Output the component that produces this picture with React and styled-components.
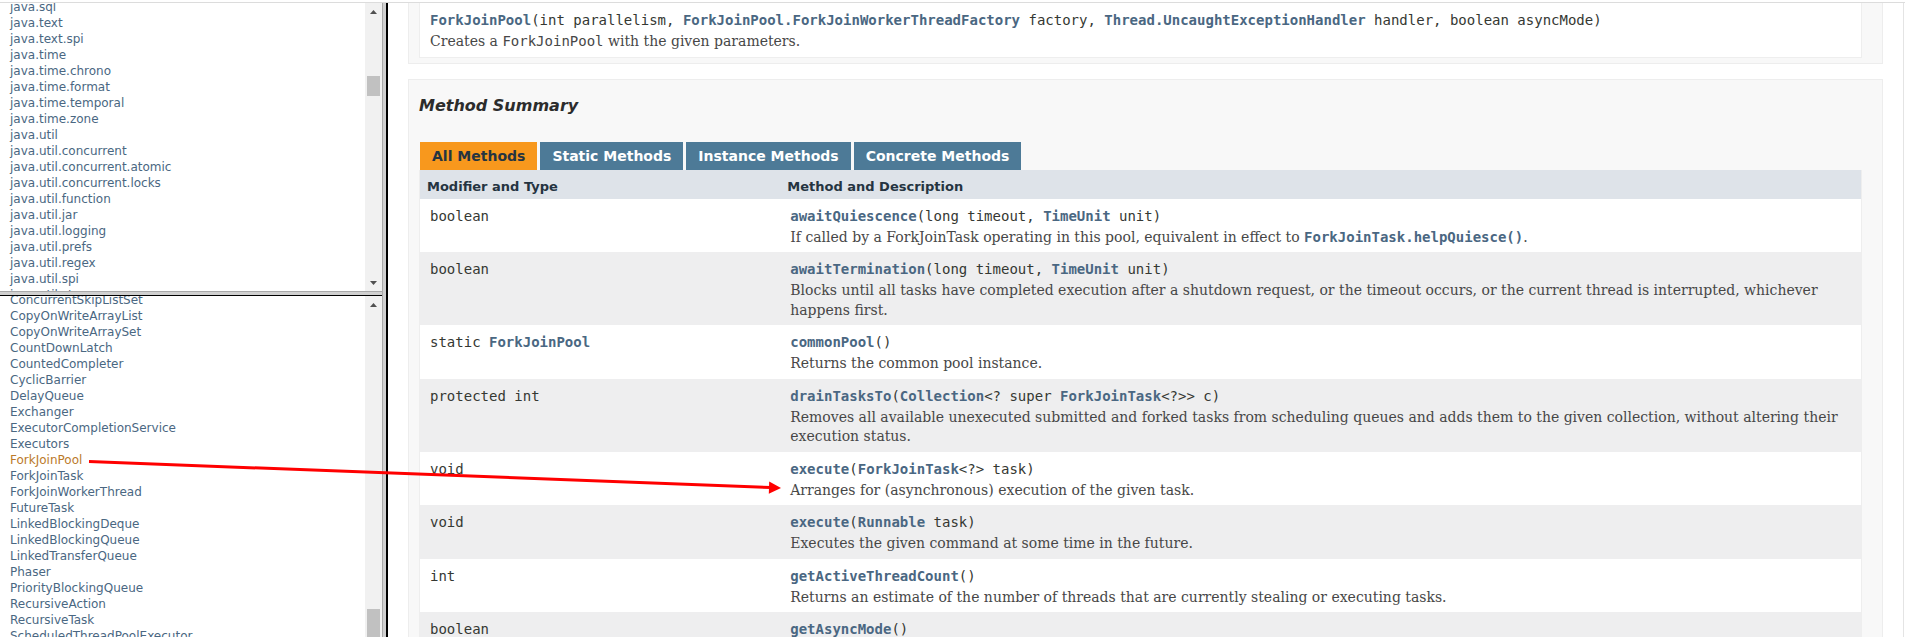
import React from 'react';
import styled, { createGlobalStyle } from 'styled-components';

const Global = createGlobalStyle`
  html, body { margin: 0; padding: 0; background: #fff; overflow: hidden; }
  #root { width: 1905px; height: 637px; }
`;

const Page = styled.div`
  position: relative;
  width: 1905px;
  height: 637px;
  display: flex;
  flex-direction: column;
  background: #fff;
  overflow: hidden;
`;

const TopEdge = styled.div`
  flex: none;
  height: 2px;
  border-bottom: 1px solid #dcdcdc;
`;

const Frames = styled.div`
  flex: 1;
  min-height: 0;
  display: flex;
`;

const LeftColumn = styled.div`
  flex: none;
  width: 382px;
  display: flex;
  flex-direction: column;
`;

const Frame = styled.div`
  display: flex;
  flex: ${p => (p.$h ? 'none' : '1')};
  height: ${p => (p.$h ? `${p.$h}px` : 'auto')};
  min-height: 0;
  overflow: hidden;
`;

const HDivider = styled.div`
  flex: none;
  height: 3px;
  background: #d0d0d0;
  border-top: 1px solid #a9a9a9;
  border-bottom: 1px solid #000;
`;

const VDivider = styled.div`
  flex: none;
  width: 3px;
  background: #d0d0d0;
  border-left: 1px solid #a9a9a9;
  border-right: 2px solid #000;
`;

const ListArea = styled.div`
  flex: 1;
  overflow: hidden;
  background: #fff;
`;

const IndexList = styled.ul`
  list-style: none;
  margin: -5px 10px 0 10px;
  padding: 0;
  font-family: "DejaVu Sans", "Liberation Sans", sans-serif;
  font-size: 12px;
`;

const IndexItem = styled.li`
  padding-top: 2px;
  line-height: 14px;
  white-space: nowrap;
  color: ${p => (p.$active ? '#bb7a2a' : '#4a6782')};
`;

const Scrollbar = styled.div`
  flex: none;
  width: 17px;
  background: #f1f1f1;
  display: flex;
  flex-direction: column;
`;

const ScrollButton = styled.div`
  flex: none;
  height: 17px;
  display: flex;
  align-items: center;
  justify-content: center;
`;

const Track = styled.div`
  flex: 1;
  min-height: 0;
  overflow: hidden;
`;

const Thumb = styled.div`
  margin: ${p => p.$top}px 2px 0 2px;
  height: ${p => p.$size}px;
  background: #c1c1c1;
`;

const RightFrame = styled.div`
  flex: 1;
  min-width: 0;
  overflow: hidden;
  padding: 0 20px;
  margin-right: 1px;
  border-right: 1px solid #e4e4e4;
  background: #fff;
  color: #353833;
`;

const Block = styled.div`
  background: #f8f8f8;
  border: 1px solid #ededed;
  border-top: ${p => (p.$cut ? 'none' : '1px solid #ededed')};
  padding: 0 20px 5px 10px;
  margin-bottom: 15px;
`;

const Heading = styled.h3`
  margin: 16px 0;
  font-family: "DejaVu Sans", "Liberation Sans", sans-serif;
  font-size: 16px;
  line-height: 19px;
  font-weight: bold;
  font-style: italic;
  color: #2c2c2c;
`;

const Caption = styled.div`
  display: flex;
  gap: 3px;
  padding: 11px 0 0 1px;
`;

const Tab = styled.span`
  height: 28px;
  line-height: 28px;
  padding: 0 12px;
  font-family: "DejaVu Sans", "Liberation Sans", sans-serif;
  font-size: 14px;
  font-weight: bold;
  white-space: nowrap;
  background: ${p => (p.$active ? '#f8981d' : '#4d7a97')};
  color: ${p => (p.$active ? '#253441' : '#ffffff')};
`;

const SummaryTable = styled.table`
  width: 100%;
  table-layout: fixed;
  border-collapse: separate;
  border-spacing: 0;
  border: 1px solid #eee;
  border-top: none;
`;

const Column = styled.col`
  width: ${p => p.$w || 'auto'};
`;

const HeadCell = styled.th`
  background: #dee3e9;
  text-align: left;
  vertical-align: top;
  padding: 8px 3px 3px 7px;
  font-family: "DejaVu Sans", "Liberation Sans", sans-serif;
  font-size: 13px;
  line-height: 18px;
  font-weight: bold;
  color: #253441;
  white-space: nowrap;
`;

const Cell = styled.td`
  vertical-align: top;
  text-align: left;
  padding: 8px 0 3px 10px;
  background: ${p => (p.$alt ? '#eeeeef' : '#ffffff')};
`;

const CodeLine = styled.div`
  font-family: "DejaVu Sans Mono", "Liberation Mono", monospace;
  font-size: 14px;
  line-height: 18px;
  color: #353833;
  white-space: nowrap;
`;

const Link = styled.span`
  color: #4a6782;
  font-weight: bold;
`;

const Desc = styled.div`
  margin: 3px 10px 2px 0;
  font-family: "DejaVu Serif", "Liberation Serif", serif;
  font-size: 14px;
  line-height: 19.5px;
  color: #474747;
`;

const InlineCode = styled.span`
  font-family: "DejaVu Sans Mono", "Liberation Mono", monospace;
  font-size: 14px;
  line-height: 1;
  color: ${p => (p.$link ? '#4a6782' : '#474747')};
  font-weight: ${p => (p.$link ? 'bold' : 'normal')};
`;

const Overlay = styled.svg`
  position: absolute;
  left: 0;
  top: 0;
  pointer-events: none;
`;

const packages = [
  'java.sql', 'java.text', 'java.text.spi', 'java.time', 'java.time.chrono',
  'java.time.format', 'java.time.temporal', 'java.time.zone', 'java.util',
  'java.util.concurrent', 'java.util.concurrent.atomic', 'java.util.concurrent.locks',
  'java.util.function', 'java.util.jar', 'java.util.logging', 'java.util.prefs',
  'java.util.regex', 'java.util.spi', 'java.util.stream',
];

const classes = [
  'ConcurrentSkipListSet', 'CopyOnWriteArrayList', 'CopyOnWriteArraySet', 'CountDownLatch',
  'CountedCompleter', 'CyclicBarrier', 'DelayQueue', 'Exchanger', 'ExecutorCompletionService',
  'Executors', 'ForkJoinPool', 'ForkJoinTask', 'ForkJoinWorkerThread', 'FutureTask',
  'LinkedBlockingDeque', 'LinkedBlockingQueue', 'LinkedTransferQueue', 'Phaser',
  'PriorityBlockingQueue', 'RecursiveAction', 'RecursiveTask', 'ScheduledThreadPoolExecutor',
];

const methods = [
  {
    type: [['boolean']],
    sig: [['awaitQuiescence', 'l'], ['(long timeout, '], ['TimeUnit', 'l'], [' unit)']],
    desc: [['If called by a ForkJoinTask operating in this pool, equivalent in effect to '], ['ForkJoinTask.helpQuiesce()', 'c'], ['.']],
  },
  {
    type: [['boolean']],
    sig: [['awaitTermination', 'l'], ['(long timeout, '], ['TimeUnit', 'l'], [' unit)']],
    desc: [['Blocks until all tasks have completed execution after a shutdown request, or the timeout occurs, or the current thread is interrupted, whichever happens first.']],
  },
  {
    type: [['static '], ['ForkJoinPool', 'l']],
    sig: [['commonPool', 'l'], ['()']],
    desc: [['Returns the common pool instance.']],
  },
  {
    type: [['protected int']],
    sig: [['drainTasksTo', 'l'], ['('], ['Collection', 'l'], ['<? super '], ['ForkJoinTask', 'l'], ['<?>> c)']],
    desc: [['Removes all available unexecuted submitted and forked tasks from scheduling queues and adds them to the given collection, without altering their execution status.']],
  },
  {
    type: [['void']],
    sig: [['execute', 'l'], ['('], ['ForkJoinTask', 'l'], ['<?> task)']],
    desc: [['Arranges for (asynchronous) execution of the given task.']],
  },
  {
    type: [['void']],
    sig: [['execute', 'l'], ['('], ['Runnable', 'l'], [' task)']],
    desc: [['Executes the given command at some time in the future.']],
  },
  {
    type: [['int']],
    sig: [['getActiveThreadCount', 'l'], ['()']],
    desc: [['Returns an estimate of the number of threads that are currently stealing or executing tasks.']],
  },
  {
    type: [['boolean']],
    sig: [['getAsyncMode', 'l'], ['()']],
    desc: [['Returns true if this pool uses local first-in-first-out scheduling mode for forked tasks that are never joined.']],
  },
];

const tabs = ['All Methods', 'Static Methods', 'Instance Methods', 'Concrete Methods'];

const Arrow = ({ up }) => (
  <svg width="7" height="4" viewBox="0 0 7 4">
    <polygon points={up ? '0,4 3.5,0 7,4' : '0,0 7,0 3.5,4'} fill="#505050" />
  </svg>
);

const ScrollBar = ({ thumbTop, thumbSize, down }) => (
  <Scrollbar>
    <ScrollButton><Arrow up /></ScrollButton>
    <Track><Thumb $top={thumbTop} $size={thumbSize} /></Track>
    {down && <ScrollButton><Arrow /></ScrollButton>}
  </Scrollbar>
);

const Code = ({ parts }) => (
  <CodeLine>
    {parts.map(([t, k], i) => (k === 'l' ? <Link key={i}>{t}</Link> : <React.Fragment key={i}>{t}</React.Fragment>))}
  </CodeLine>
);

const Description = ({ parts }) => (
  <Desc>
    {parts.map(([t, k], i) => {
      if (k === 'c') return <InlineCode key={i} $link>{t}</InlineCode>;
      if (k === 'm') return <InlineCode key={i}>{t}</InlineCode>;
      return <React.Fragment key={i}>{t}</React.Fragment>;
    })}
  </Desc>
);

export default function App() {
  return (
    <Page>
      <Global />
      <TopEdge />
      <Frames>
        <LeftColumn>
          <Frame $h={288}>
            <ListArea>
              <IndexList>
                {packages.map(p => <IndexItem key={p}>{p}</IndexItem>)}
              </IndexList>
            </ListArea>
            <ScrollBar thumbTop={56} thumbSize={20} down />
          </Frame>
          <HDivider />
          <Frame>
            <ListArea>
              <IndexList>
                {classes.map(c => <IndexItem key={c} $active={c === 'ForkJoinPool'}>{c}</IndexItem>)}
              </IndexList>
            </ListArea>
            <ScrollBar thumbTop={296} thumbSize={60} />
          </Frame>
        </LeftColumn>
        <VDivider />
        <RightFrame>
          <Block $cut>
            <SummaryTable>
              <tbody>
                <tr>
                  <Cell>
                    <Code parts={[
                      ['ForkJoinPool', 'l'], ['(int parallelism, '],
                      ['ForkJoinPool.ForkJoinWorkerThreadFactory', 'l'], [' factory, '],
                      ['Thread.UncaughtExceptionHandler', 'l'], [' handler, boolean asyncMode)'],
                    ]} />
                    <Description parts={[['Creates a '], ['ForkJoinPool', 'm'], [' with the given parameters.']]} />
                  </Cell>
                </tr>
              </tbody>
            </SummaryTable>
          </Block>
          <Block>
            <Heading>Method Summary</Heading>
            <Caption>
              {tabs.map((t, i) => <Tab key={t} $active={i === 0}>{t}</Tab>)}
            </Caption>
            <SummaryTable>
              <colgroup>
                <Column $w="25%" />
                <Column />
              </colgroup>
              <thead>
                <tr>
                  <HeadCell>Modifier and Type</HeadCell>
                  <HeadCell>Method and Description</HeadCell>
                </tr>
              </thead>
              <tbody>
                {methods.map((m, i) => (
                  <tr key={i}>
                    <Cell $alt={i % 2 === 1}><Code parts={m.type} /></Cell>
                    <Cell $alt={i % 2 === 1}>
                      <Code parts={m.sig} />
                      <Description parts={m.desc} />
                    </Cell>
                  </tr>
                ))}
              </tbody>
            </SummaryTable>
          </Block>
        </RightFrame>
      </Frames>
      <Overlay width="1905" height="637" viewBox="0 0 1905 637">
        <line x1="89" y1="461.5" x2="771" y2="487.6" stroke="#ff0000" strokeWidth="3" />
        <polygon points="781,488 769.2,481.6 768.8,493.8" fill="#ff0000" />
      </Overlay>
    </Page>
  );
}
